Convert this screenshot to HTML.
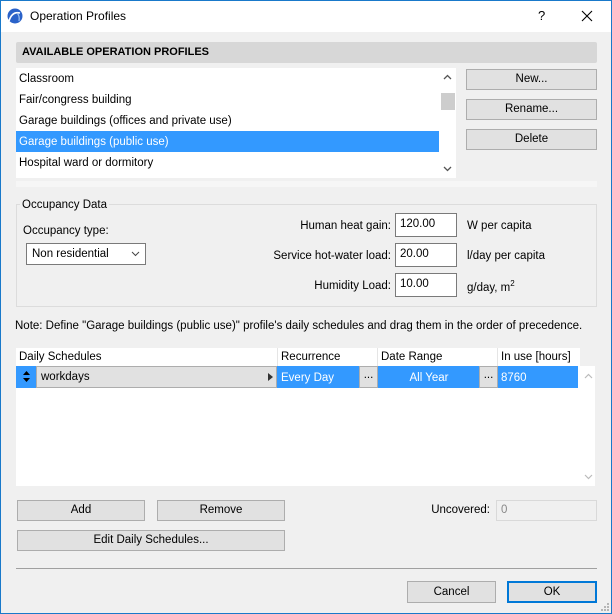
<!DOCTYPE html>
<html><head><meta charset="utf-8"><style>
*{box-sizing:border-box;margin:0;padding:0}
body{width:612px;height:614px;overflow:hidden;font-family:"Liberation Sans",sans-serif;font-size:11.5px;color:#000;background:#f0f0f0;position:relative}
.a{position:absolute;white-space:nowrap}
.win{position:absolute;left:0;top:0;width:612px;height:614px;border:1px solid #1979ca;pointer-events:none}
.btn{position:absolute;background:#e1e1e1;border:1px solid #adadad;text-align:center;line-height:19px}
.inp{position:absolute;background:#fff;border:1px solid #7a7a7a;padding-left:4px;line-height:21px}
</style></head><body>
<div class="a" style="left:0;top:0;width:612px;height:32px;background:#fff"></div>
<svg class="a" style="left:7px;top:8px" width="16" height="16" viewBox="0 0 16 16"><circle cx="8" cy="8" r="7.5" fill="#2a62c9"/><path d="M2 13 Q5 3 13 5" stroke="#fff" stroke-width="1.6" fill="none"/><path d="M10 5 Q13 8 12 13" stroke="#9cc0f0" stroke-width="1.2" fill="none"/></svg>
<div class="a" style="left:30px;top:9px;font-size:12px">Operation Profiles</div>
<div class="a" style="left:538px;top:8px;font-size:13px">?</div>
<svg class="a" style="left:581px;top:10px" width="12" height="12"><path d="M1 1L11 11M11 1L1 11" stroke="#000" stroke-width="1.1"/></svg>

<div class="a" style="left:16px;top:42px;width:581px;height:21px;background:#d7d7d7;border-radius:2px"></div>
<div class="a" style="left:22px;top:46px;font-weight:bold;font-size:11px">AVAILABLE OPERATION PROFILES</div>

<div class="a" style="left:16px;top:68px;width:440px;height:110px;background:#fff"></div>
<div class="a" style="left:19px;top:73px">Classroom</div>
<div class="a" style="left:19px;top:94px">Fair/congress building</div>
<div class="a" style="left:19px;top:115px">Garage buildings (offices and private use)</div>
<div class="a" style="left:16px;top:131px;width:423px;height:21px;background:#3399ff"></div>
<div class="a" style="left:19px;top:136px;color:#fff">Garage buildings (public use)</div>
<div class="a" style="left:19px;top:157px">Hospital ward or dormitory</div>
<div class="a" style="left:440px;top:68px;width:16px;height:110px;background:#fff"></div>
<div class="a" style="left:441px;top:93px;width:14px;height:17px;background:#cdcdcd"></div>
<svg class="a" style="left:443px;top:74px" width="9" height="6"><path d="M1 5L4.5 1.5L8 5" stroke="#555" stroke-width="1.3" fill="none"/></svg>
<svg class="a" style="left:443px;top:166px" width="9" height="6"><path d="M1 1L4.5 4.5L8 1" stroke="#555" stroke-width="1.3" fill="none"/></svg>

<div class="btn" style="left:466px;top:69px;width:131px;height:21px">New...</div>
<div class="btn" style="left:466px;top:99px;width:131px;height:21px">Rename...</div>
<div class="btn" style="left:466px;top:129px;width:131px;height:21px">Delete</div>

<div class="a" style="left:16px;top:181px;width:581px;height:6px;background:#f6f6f6"></div>
<div class="a" style="left:16px;top:204px;width:581px;height:103px;border:1px solid #dcdcdc"></div>
<div class="a" style="left:20px;top:199px;background:#f0f0f0;padding:0 2px">Occupancy Data</div>
<div class="a" style="left:23px;top:225px">Occupancy type:</div>
<div class="a" style="left:26px;top:243px;width:120px;height:22px;background:#fff;border:1px solid #7a7a7a;padding-left:5px;line-height:20px">Non residential</div>
<svg class="a" style="left:131px;top:251px" width="9" height="6"><path d="M1 1L4.5 4.5L8 1" stroke="#444" stroke-width="1" fill="none"/></svg>
<div class="a" style="right:221px;top:220px">Human heat gain:</div>
<div class="a" style="right:221px;top:250px">Service hot-water load:</div>
<div class="a" style="right:221px;top:280px">Humidity Load:</div>
<div class="inp" style="left:395px;top:213px;width:62px;height:24px">120.00</div>
<div class="inp" style="left:395px;top:243px;width:62px;height:24px">20.00</div>
<div class="inp" style="left:395px;top:273px;width:62px;height:24px">10.00</div>
<div class="a" style="left:467px;top:220px">W per capita</div>
<div class="a" style="left:467px;top:250px">l/day per capita</div>
<div class="a" style="left:467px;top:279px">g/day, m<sup style="font-size:8px">2</sup></div>

<div class="a" style="left:15px;top:320px">Note: Define "Garage buildings (public use)" profile's daily schedules and drag them in the order of precedence.</div>

<div class="a" style="left:16px;top:348px;width:564px;height:138px;background:#fff"></div>
<div class="a" style="left:580px;top:366px;width:15px;height:120px;background:#fff"></div>
<div class="a" style="left:277px;top:348px;width:1px;height:18px;background:#e5e5e5"></div>
<div class="a" style="left:377px;top:348px;width:1px;height:18px;background:#e5e5e5"></div>
<div class="a" style="left:497px;top:348px;width:1px;height:18px;background:#e5e5e5"></div>
<div class="a" style="left:19px;top:351px">Daily Schedules</div>
<div class="a" style="left:281px;top:351px">Recurrence</div>
<div class="a" style="left:381px;top:351px">Date Range</div>
<div class="a" style="left:501px;top:351px">In use [hours]</div>
<div class="a" style="left:16px;top:366px;width:562px;height:22px;background:#3399ff"></div>
<div class="a" style="left:36px;top:366px;width:241px;height:22px;background:#e1e1e1;border:1px solid #adadad"></div>
<div class="a" style="left:41px;top:371px">workdays</div>
<svg class="a" style="left:268px;top:373px" width="5" height="8"><path d="M0 0L5 4L0 8Z" fill="#333"/></svg>
<svg class="a" style="left:23px;top:371px" width="7" height="11"><path d="M0 4L3.5 0L7 4ZM0 7L3.5 11L7 7Z" fill="#000"/></svg>
<div class="a" style="left:281px;top:372px;color:#fff">Every Day</div>
<div class="a" style="left:359px;top:366px;width:19px;height:22px;background:#e1e1e1;border:1px solid #adadad;text-align:center;line-height:17px">...</div>
<div class="a" style="left:379px;top:372px;width:100px;text-align:center;color:#fff">All Year</div>
<div class="a" style="left:479px;top:366px;width:19px;height:22px;background:#e1e1e1;border:1px solid #adadad;text-align:center;line-height:17px">...</div>
<div class="a" style="left:501px;top:372px;color:#fff">8760</div>
<svg class="a" style="left:584px;top:373px" width="9" height="6"><path d="M1 5L4.5 1.5L8 5" stroke="#bbb" stroke-width="1.2" fill="none"/></svg>
<svg class="a" style="left:584px;top:474px" width="9" height="6"><path d="M1 1L4.5 4.5L8 1" stroke="#bbb" stroke-width="1.2" fill="none"/></svg>

<div class="btn" style="left:17px;top:500px;width:128px;height:21px">Add</div>
<div class="btn" style="left:157px;top:500px;width:128px;height:21px">Remove</div>
<div class="btn" style="left:17px;top:530px;width:268px;height:21px">Edit Daily Schedules...</div>
<div class="a" style="right:122px;top:504px">Uncovered:</div>
<div class="a" style="left:496px;top:500px;width:101px;height:21px;background:#f0f0f0;border:1px solid #d9d9d9;color:#888;padding-left:4px;line-height:19px">0</div>

<div class="a" style="left:16px;top:568px;width:581px;height:1px;background:#a0a0a0"></div>
<div class="btn" style="left:407px;top:581px;width:89px;height:22px;line-height:20px">Cancel</div>
<div class="btn" style="left:507px;top:581px;width:90px;height:22px;border:2px solid #0078d7;line-height:18px">OK</div>
<svg class="a" style="left:600px;top:602px" width="10" height="10"><g fill="#b5b5b5"><rect x="7" y="1" width="2" height="2"/><rect x="4" y="4" width="2" height="2"/><rect x="7" y="4" width="2" height="2"/><rect x="1" y="7" width="2" height="2"/><rect x="4" y="7" width="2" height="2"/><rect x="7" y="7" width="2" height="2"/></g></svg>
<div class="win"></div>
</body></html>
